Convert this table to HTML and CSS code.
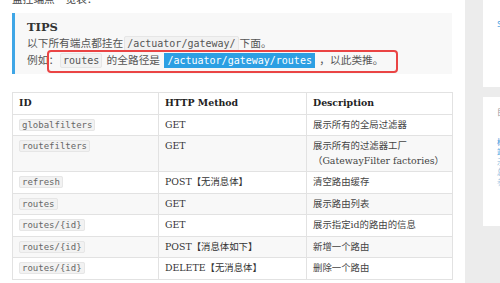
FILE: index.html
```html
<!DOCTYPE html>
<html lang="zh-CN">
<head>
<meta charset="utf-8">
<title>Gateway endpoints</title>
<link rel="stylesheet" href="styles.css">
</head>
<body>
<div class="page">
  <main class="main">
    <p class="lead">监控端点一览表：</p>
    <div class="tips">
      <div class="tips-title">TIPS</div>
      <p class="tips-line">以下所有端点都挂在<code>/actuator/gateway/</code>下面。</p>
      <p class="tips-line">例如：<code>routes</code> 的全路径是 <code class="selected">/actuator/gateway/routes</code> ，以此类推。<span class="mark"></span></p>
    </div>
    <table class="endpoints">
      <colgroup>
        <col class="c1"><col class="c2"><col class="c3">
      </colgroup>
      <thead>
        <tr><th>ID</th><th>HTTP Method</th><th>Description</th></tr>
      </thead>
      <tbody>
        <tr><td><code>globalfilters</code></td><td>GET</td><td>展示所有的全局过滤器</td></tr>
        <tr><td><code>routefilters</code></td><td>GET</td><td>展示所有的过滤器工厂<br>（GatewayFilter factories）</td></tr>
        <tr><td><code>refresh</code></td><td>POST【无消息体】</td><td>清空路由缓存</td></tr>
        <tr><td><code>routes</code></td><td>GET</td><td>展示路由列表</td></tr>
        <tr><td><code>routes/{id}</code></td><td>GET</td><td>展示指定id的路由的信息</td></tr>
        <tr><td><code>routes/{id}</code></td><td>POST【消息体如下】</td><td>新增一个路由</td></tr>
        <tr><td><code>routes/{id}</code></td><td>DELETE【无消息体】</td><td>删除一个路由</td></tr>
      </tbody>
    </table>
  </main>
  <aside class="side">
    <div class="card card-top">
      <a class="side-link">Spring Cloud</a>
    </div>
    <div class="card card-list">
      <div class="side-head">目录</div>
      <a class="side-link">概述</a>
      <a class="side-link">端点</a>
      <a class="side-item">示例</a>
      <a class="side-item">总结</a>
      <a class="side-note">参考</a>
    </div>
  </aside>
</div>
</body>
</html>
```
FILE: styles.css
```css
html, body {
  margin: 0;
  padding: 0;
  background: #ffffff;
}
body {
  font-family: "DejaVu Serif", "Noto Sans CJK SC", serif;
  color: #333333;
  font-size: 10.7px;
  line-height: 17px;
  overflow: hidden;
  height: 283px;
}
.page {
  display: flex;
  height: 283px;
}
.main {
  width: 440px;
  padding-left: 12px;
  padding-right: 13px;
  flex: none;
}
.lead {
  margin: -9px 0 5px;
  color: #444;
}
.tips {
  position: relative;
  background: #f8f8f8;
  border-left: 3px solid #3fa6e6;
  padding: 6px 12px 5px 12px;
}
.tips-title {
  font-weight: bold;
  font-size: 11.5px;
  line-height: 16px;
  color: #333;
}
.tips-line {
  margin: 0;
  color: #555;
}
code {
  font-family: "DejaVu Sans Mono", monospace;
  font-size: 10px;
  line-height: 14px;
  background: #f2f2f2;
  border: 1px solid #e6e6e6;
  border-radius: 2px;
  padding: 1px 2px;
  color: #555;
}
.tips code {
  margin: 0 1px;
}
code.selected {
  background: #2c9fe3;
  border-color: #2c9fe3;
  color: #ffffff;
  border-radius: 0;
}
.mark {
  position: absolute;
  left: 32px;
  top: 37px;
  width: 347px;
  height: 19px;
  border: 2px solid #ea4444;
  border-radius: 4px;
}
.endpoints {
  margin-top: 18px;
  width: 440px;
  border-collapse: collapse;
  table-layout: fixed;
  font-size: 9.4px;
  line-height: 14.5px;
}
.c1 { width: 146px; }
.c2 { width: 148px; }
.c3 { width: 146px; }
.endpoints th,
.endpoints td {
  border: 1px solid #e2e2e2;
  padding: 3px 6px;
  text-align: left;
  vertical-align: top;
  color: #333;
}
.endpoints th {
  font-weight: bold;
  color: #222;
}
.endpoints td:nth-child(3) {
  color: #444;
}
.endpoints tbody tr:nth-child(even) {
  background: #f8f8f8;
}
.endpoints code {
  font-size: 9px;
  line-height: 12px;
  padding: 0 2px;
  color: #666;
}
.side {
  flex: 1;
  background: #ececec;
  padding-left: 18px;
  overflow: hidden;
}
.card {
  background: #ffffff;
  padding-left: 14px;
  width: 200px;
  font-family: "Noto Sans CJK SC", sans-serif;
  font-size: 8px;
  line-height: 10px;
  white-space: nowrap;
}
.card-top {
  height: 87px;
  padding-top: 19px;
  box-sizing: border-box;
}
.card-list {
  margin-top: 10px;
  height: 129px;
  padding-top: 10px;
  box-sizing: border-box;
}
.side-head {
  color: #999;
  margin-bottom: 20px;
}
.side-link,
.side-item,
.side-note {
  display: block;
}
.side-link { color: #4aa3df; }
.side-item { color: #7fb3d8; }
.side-note { color: #a6cbe6; }
```
